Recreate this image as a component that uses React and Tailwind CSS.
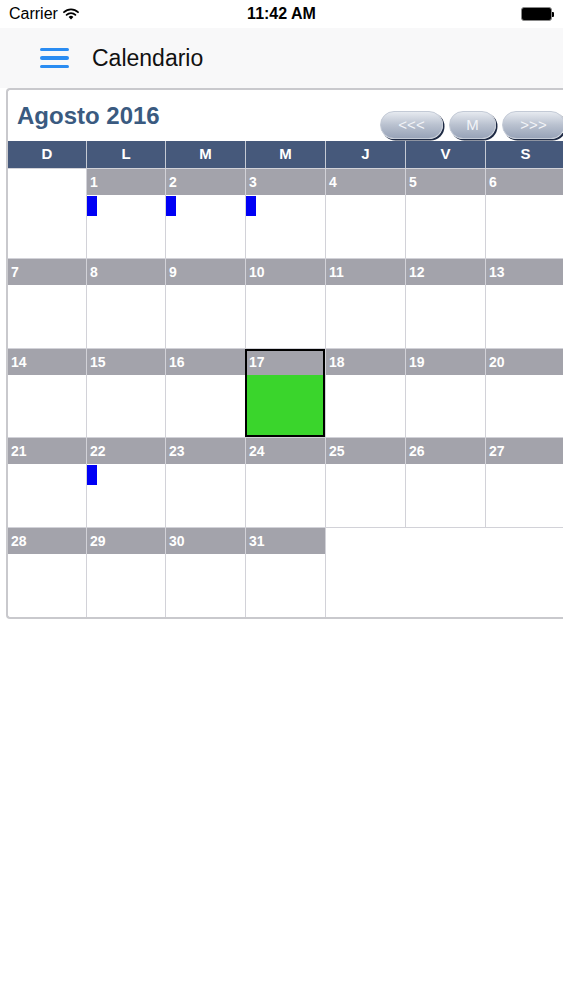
import React from "react";

const weeks = [
  [null, 1, 2, 3, 4, 5, 6],
  [7, 8, 9, 10, 11, 12, 13],
  [14, 15, 16, 17, 18, 19, 20],
  [21, 22, 23, 24, 25, 26, 27],
  [28, 29, 30, 31, null, null, null],
];

const events = [1, 2, 3, 22];
const today = 17;
const dayNames = ["D", "L", "M", "M", "J", "V", "S"];

function Wifi() {
  return (
    <svg width="16" height="12" viewBox="0 0 16 12" className="ml-[5px]">
      <path d="M1 4.2 A10 10 0 0 1 15 4.2" stroke="black" strokeWidth="1.8" fill="none" strokeLinecap="round" />
      <path d="M3.6 6.9 A6.3 6.3 0 0 1 12.4 6.9" stroke="black" strokeWidth="1.8" fill="none" strokeLinecap="round" />
      <path d="M8 11.5 L5.6 8.9 A3.4 3.4 0 0 1 10.4 8.9 Z" fill="black" />
    </svg>
  );
}

function NavButton({ label, width }) {
  return (
    <div
      className={`${width} h-[28px] rounded-full flex items-center justify-center text-[15px] text-[#f2f4f8] bg-gradient-to-b from-[#e6eaf0] via-[#b9c1cf] to-[#98a3b8] shadow-[1.5px_1.5px_0_#1e2a44] border border-[#c3cad6]`}
    >
      {label}
    </div>
  );
}

function Cell({ day, index, prevHasDay }) {
  const showBorder = index > 0 && (day !== null || prevHasDay);
  const isToday = day === today;
  return (
    <div
      className={`h-full flex flex-col ${showBorder ? "border-l border-[#d2d2d8]" : ""} ${
        isToday ? "outline-2 outline-black -outline-offset-2 relative z-10" : ""
      }`}
    >
      {day !== null && (
        <div className="h-[26px] bg-[#a3a3ab] flex items-center pl-[3px] text-white font-bold text-[14px] leading-none">
          {day}
        </div>
      )}
      {isToday && <div className="flex-1 bg-[#3ad52c]" />}
      {events.includes(day) && <div className="w-[10px] h-[20px] bg-[#0000f5] mt-[1px]" />}
    </div>
  );
}

const cols = "grid-cols-[78px_79px_80px_80px_80px_80px_80px]";

export default function App() {
  return (
    <div
      className="w-[563px] h-[1000px] bg-white overflow-hidden text-black"
      style={{ fontFamily: '"Liberation Sans", Arial, sans-serif' }}
    >
      {/* status bar */}
      <div className="h-[28px] flex items-center relative px-[9px]">
        <div className="flex items-center text-[16px]">
          Carrier
          <Wifi />
        </div>
        <div className="absolute left-0 right-0 text-center text-[16px] font-semibold pointer-events-none">11:42 AM</div>
        <div className="ml-auto flex items-center">
          <div className="w-[31px] h-[14px] rounded-[3px] bg-black border border-[#888]" />
          <div className="w-[2px] h-[5px] bg-black rounded-r-[1px]" />
        </div>
      </div>

      {/* nav bar */}
      <div className="h-[60px] bg-[#f8f8f9] flex items-center">
        <div className="ml-[40px] w-[29px] flex flex-col gap-[5px]">
          <div className="h-[3.5px] rounded-full bg-[#2a8cf2]" />
          <div className="h-[3.5px] rounded-full bg-[#2a8cf2]" />
          <div className="h-[3.5px] rounded-full bg-[#2a8cf2]" />
        </div>
        <div className="ml-[23px] text-[23px] text-[#111]">Calendario</div>
      </div>

      {/* calendar */}
      <div className="ml-[6px] w-[600px] border-2 border-r-0 border-[#c9c9cd] rounded-l-[4px]">
        <div className="h-[51px] flex w-[557px]">
          <div className="pl-[9px] pt-[12px] text-[24px] leading-[28px] font-bold text-[#3a5a80]">Agosto 2016</div>
          <div className="ml-auto pt-[21px] flex gap-[6px]">
            <NavButton label="<<<" width="w-[63px]" />
            <NavButton label="M" width="w-[47px]" />
            <NavButton label=">>>" width="w-[63px]" />
          </div>
        </div>

        <div className={`grid ${cols} h-[27px] bg-[#46597b]`}>
          {dayNames.map((d, i) => (
            <div
              key={i}
              className={`flex items-center justify-center text-white font-bold text-[15px] ${
                i > 0 ? "border-l border-[#c5cad4]" : ""
              }`}
            >
              {d}
            </div>
          ))}
        </div>

        {weeks.map((week, w) => (
          <div key={w} className={`grid ${cols} h-[89.8px] border-t border-[#d2d2d8]`}>
            {week.map((day, i) => (
              <Cell key={i} day={day} index={i} prevHasDay={i > 0 && week[i - 1] !== null} />
            ))}
          </div>
        ))}
      </div>
    </div>
  );
}
